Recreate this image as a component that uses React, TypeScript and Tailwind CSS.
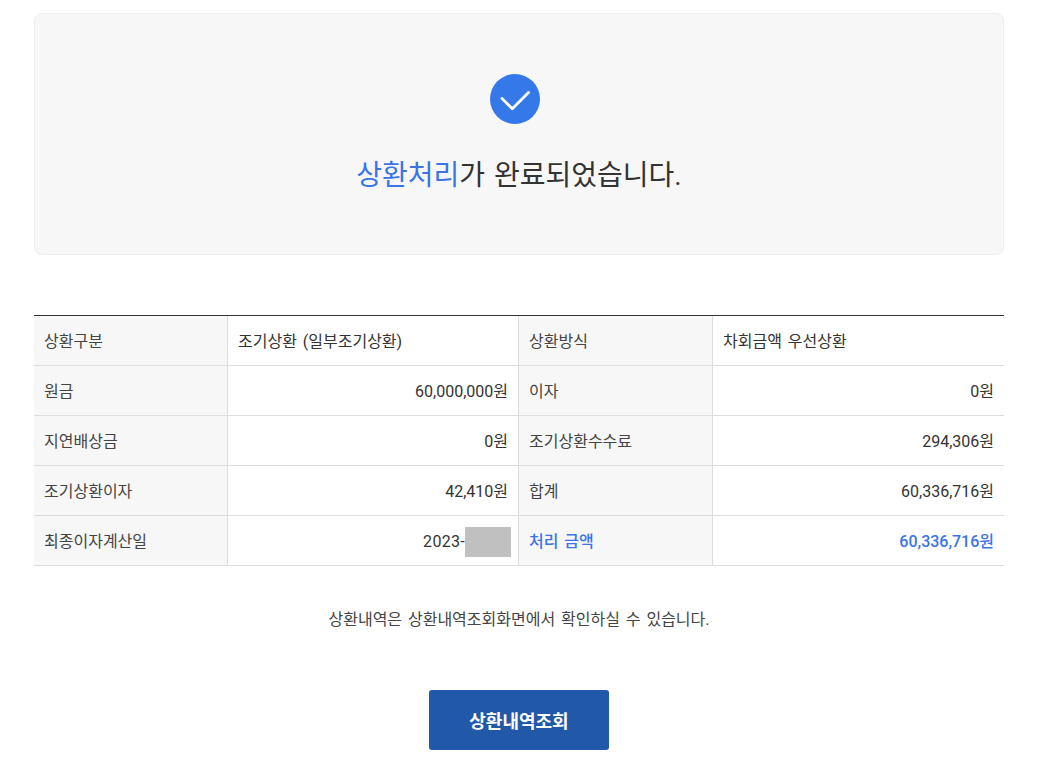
const rows = [
  ['상환구분', '조기상환 (일부조기상환)', '상환방식', '차회금액 우선상환'],
  ['원금', '60,000,000원', '이자', '0원'],
  ['지연배상금', '0원', '조기상환수수료', '294,306원'],
  ['조기상환이자', '42,410원', '합계', '60,336,716원'],
];

export default function App() {
  return (
    <div className="bg-white min-h-[769px] pl-[34px] pr-[33px] pt-[13px] text-[#333] [word-spacing:0.12em] font-['Roboto','Noto_Sans_CJK_KR',sans-serif]">
      <div className="h-[242px] bg-[#f7f7f7] border border-[#eee] rounded-lg flex flex-col items-center pt-[60px]">
        <div className="w-[50px] h-[50px] mr-2 rounded-full bg-[#3478ea]">
          <svg width="50" height="50" viewBox="0 0 50 50" fill="none">
            <path d="M12 24.500L22.300 34.800L38.500 18.500" stroke="#fff" strokeWidth="2.800" strokeLinecap="round" strokeLinejoin="round" />
          </svg>
        </div>
        <h1 className="mt-[31px] text-[28px] leading-[42px] font-normal text-[#333]">
          <span className="text-[#3a74e8]">상환처리</span>가 완료되었습니다.
        </h1>
      </div>

      <div className="mt-[60px] border-t border-[#333] text-[16px]">
        {rows.map((row, i) => (
          <div key={i} className="grid grid-cols-[194px_291px_194px_291px] h-[50px] border-b border-[#ddd]">
            <div className="bg-[#f7f7f7] border-r border-[#ddd] px-[10px] pt-[2px] flex items-center text-[#444]">{row[0]}</div>
            <div className={`border-r border-[#ddd] px-[10px] pt-[2px] flex items-center ${i === 0 ? '' : 'justify-end'}`}>{row[1]}</div>
            <div className="bg-[#f7f7f7] border-r border-[#ddd] px-[10px] pt-[2px] flex items-center text-[#444]">{row[2]}</div>
            <div className={`px-[10px] pt-[2px] flex items-center ${i === 0 ? '' : 'justify-end'}`}>{row[3]}</div>
          </div>
        ))}
        <div className="grid grid-cols-[194px_291px_194px_291px] h-[50px] border-b border-[#ddd]">
          <div className="bg-[#f7f7f7] border-r border-[#ddd] px-[10px] pt-[2px] flex items-center text-[#444]">최종이자계산일</div>
          <div className="border-r border-[#ddd] pr-[7px] pt-[2px] flex items-center justify-end">
            <span className="tracking-[0.3px]">2023-</span>
            <span className="inline-block w-[46px] h-[30px] bg-[#c0c0c0]" />
          </div>
          <div className="bg-[#f7f7f7] border-r border-[#ddd] px-[10px] pt-[2px] flex items-center font-medium text-[#3a74e8]">처리 금액</div>
          <div className="px-[10px] pt-[2px] flex items-center justify-end font-medium text-[#3a74e8]">60,336,716원</div>
        </div>
      </div>

      <p className="mt-[43px] text-center text-[16px] leading-[22px] text-[#444]">상환내역은 상환내역조회화면에서 확인하실 수 있습니다.</p>

      <div className="mt-[59px] flex justify-center">
        <button className="w-[180px] h-[60px] pt-[2px] rounded-[3px] bg-[#2158a8] text-white text-[18px] font-bold">상환내역조회</button>
      </div>
    </div>
  );
}
